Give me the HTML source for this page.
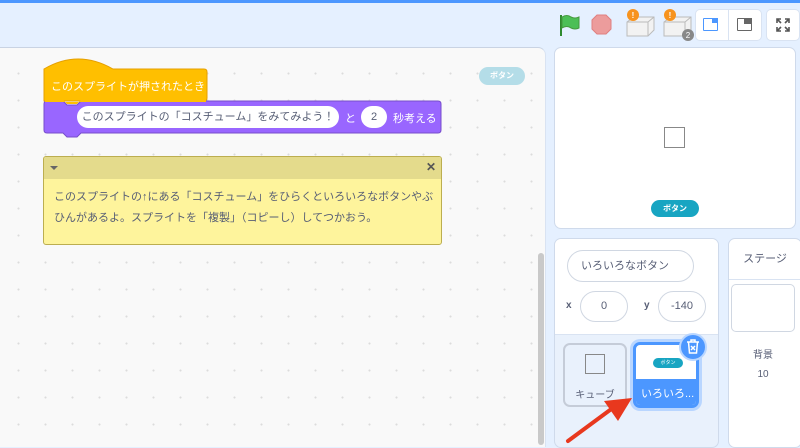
<!DOCTYPE html>
<html><head><meta charset="utf-8"><style>
*{box-sizing:border-box;margin:0;padding:0}
body{width:800px;height:445px;overflow:hidden;background:#e5f0ff;font-family:"Liberation Sans","Noto Sans CJK JP",sans-serif;position:relative;color:#575e75}
.abs{position:absolute;white-space:nowrap}
.code{left:0;top:47px;width:546px;height:400px;background:#f9f9f9;border-top:1px solid #c9d3e3;border-right:1px solid #d9e3f2;border-top-right-radius:8px;
background-image:radial-gradient(circle,#dcdcdc 0.8px,transparent 1.2px);background-size:27px 27px;background-position:5px 12px}
.pill{border-radius:20px;background:#fff;text-align:center}
</style></head><body>
<div class="abs" style="left:0;top:0;width:800px;height:3px;background:#4c97ff"></div>
<svg class="abs" style="left:558px;top:12px" width="24" height="26" viewBox="0 0 24 26"><path d="M3 3 L3 24" stroke="#2e8a2e" stroke-width="2"/><path d="M4 5 Q9 2 13 5 Q17 7 21 5 L21 16 Q17 18 13 16 Q9 13 4 16 Z" fill="#4cbf56" stroke="#45993d" stroke-width="1"/></svg>
<svg class="abs" style="left:591px;top:14px" width="21" height="21" viewBox="0 0 21 21"><polygon points="6,1 15,1 20,6 20,15 15,20 6,20 1,15 1,6" fill="#ec9c9c" stroke="#e08080"/></svg>
<svg class="abs" style="left:624px;top:8px" width="34" height="30" viewBox="0 0 34 30"><path d="M3 14 L10 9 L30 9 L30 22 L24 28 L3 28 Z" fill="#f2f2f2" stroke="#bbb"/><path d="M3 14 L24 14 L30 9 M24 14 L24 28" fill="none" stroke="#bbb"/><circle cx="9" cy="7" r="6" fill="#f7931e"/><text x="9" y="10" font-size="8" fill="#fff" text-anchor="middle" font-weight="bold">!</text></svg>
<svg class="abs" style="left:661px;top:8px" width="34" height="34" viewBox="0 0 34 34"><path d="M3 14 L10 9 L30 9 L30 22 L24 28 L3 28 Z" fill="#f2f2f2" stroke="#bbb"/><path d="M3 14 L24 14 L30 9 M24 14 L24 28" fill="none" stroke="#bbb"/><circle cx="9" cy="7" r="6" fill="#f7931e"/><text x="9" y="10" font-size="8" fill="#fff" text-anchor="middle" font-weight="bold">!</text><circle cx="27" cy="27" r="6" fill="#888"/><text x="27" y="30" font-size="8" fill="#fff" text-anchor="middle">2</text></svg>
<div class="abs" style="left:695px;top:9px;width:67px;height:32px;background:#fff;border:1px solid #d9e3f2;border-radius:5px"></div>
<div class="abs" style="left:728px;top:9px;width:1px;height:32px;background:#d9e3f2"></div>
<div class="abs" style="left:703px;top:18px;width:15px;height:13px;border:1.5px solid #4c97ff;border-radius:1px"></div>
<div class="abs" style="left:712px;top:18px;width:6px;height:5px;background:#4c97ff"></div>
<div class="abs" style="left:737px;top:18px;width:15px;height:13px;border:1.5px solid #666;border-radius:1px"></div>
<div class="abs" style="left:744px;top:18px;width:8px;height:6px;background:#666"></div>
<div class="abs" style="left:766px;top:9px;width:34px;height:32px;background:#fff;border:1px solid #d9e3f2;border-radius:5px"></div>
<svg class="abs" style="left:775px;top:17px" width="16" height="16" viewBox="0 0 16 16" fill="none" stroke="#555" stroke-width="1.6"><path d="M2 6V2h4M2 2l4 4M14 6V2h-4M14 2l-4 4M2 10v4h4M2 14l4-4M14 10v4h-4M14 14l-4-4"/></svg>
<div class="abs code"></div>
<div class="abs" style="left:538px;top:253px;width:6px;height:192px;background:#c9c9c9;border-radius:3px"></div>
<div class="abs" style="left:479px;top:67px;width:46px;height:18px;border-radius:9px;background:#b4dde8;color:#fff;font-size:8px;font-weight:bold;text-align:center;line-height:18px">ボタン</div>
<svg class="abs" style="left:43px;top:55px" width="400" height="86" viewBox="0 0 400 86">
<path d="M1 14 Q35 -6 70 14 L161 14 Q164 14 164 17 L164 43 Q164 46 161 46 L1 46 Z" fill="#ffbf00" stroke="#e6a000"/>
<path d="M4 46 L20 46 L24 50 L34 50 L38 46 L395 46 Q398 46 398 49 L398 75 Q398 78 395 78 L38 78 L34 82 L24 82 L20 78 L4 78 Q1 78 1 75 L1 49 Q1 46 4 46 Z" fill="#9966ff" stroke="#774dcb"/>
<path d="M2 45 L20 45 L24 49 L34 49 L38 45 L163 45 L163 47 L2 47Z" fill="#ffbf00"/>
</svg>
<div class="abs" style="left:51px;top:78px;color:#fff;font-size:11px">このスプライトが押されたとき</div>
<div class="abs pill" style="left:77px;top:106px;width:262px;height:22px;line-height:22px;font-size:11px;color:#575e75">このスプライトの「コスチューム」をみてみよう！</div>
<div class="abs" style="left:345px;top:110px;color:#fff;font-size:11px">と</div>
<div class="abs pill" style="left:361px;top:106px;width:26px;height:22px;line-height:22px;font-size:11px;color:#575e75">2</div>
<div class="abs" style="left:393px;top:110px;color:#fff;font-size:11px">秒考える</div>
<div class="abs" style="left:43px;top:156px;width:399px;height:89px;background:#fef49c;border:1px solid #bcae50;border-radius:3px;overflow:hidden;white-space:normal">
<div style="height:22px;background:#e4db8c;position:relative">
<div class="abs" style="left:6px;top:9px;border-left:4px solid transparent;border-right:4px solid transparent;border-top:4px solid #666"></div>
<div class="abs" style="right:5px;top:3px;font-size:12px;color:#555;font-weight:bold">✕</div></div>
<div style="padding:8px 0 0 10px;font-size:11px;line-height:21px;color:#575e75">このスプライトの↑にある「コスチューム」をひらくといろいろなボタンやぶひんがあるよ。スプライトを「複製」（コピーし）してつかおう。</div>
</div>
<div class="abs" style="left:554px;top:47px;width:242px;height:182px;background:#fff;border:1px solid #cfdaeb;border-radius:7px"></div>
<div class="abs" style="left:664px;top:127px;width:21px;height:21px;border:1px solid #888"></div>
<div class="abs" style="left:651px;top:200px;width:48px;height:17px;border-radius:9px;background:#18a5c2;color:#fff;font-size:8px;font-weight:bold;text-align:center;line-height:17px">ボタン</div>
<div class="abs" style="left:554px;top:238px;width:165px;height:210px;background:#e9f1fc;border:1px solid #cfdaeb;border-radius:7px;overflow:hidden">
<div style="height:96px;background:#fff;border-bottom:1px solid #d9e3f2"></div></div>
<div class="abs pill" style="left:567px;top:250px;width:127px;height:32px;border:1px solid #d0d7e2;text-align:left;padding-left:13px;line-height:30px;font-size:11px">いろいろなボタン</div>
<div class="abs" style="left:566px;top:300px;font-size:10px;font-weight:bold">x</div>
<div class="abs pill" style="left:580px;top:291px;width:48px;height:31px;border:1px solid #d0d7e2;line-height:29px;font-size:11px">0</div>
<div class="abs" style="left:644px;top:300px;font-size:10px;font-weight:bold">y</div>
<div class="abs pill" style="left:658px;top:291px;width:48px;height:31px;border:1px solid #d0d7e2;line-height:29px;font-size:11px">-140</div>
<div class="abs" style="left:563px;top:343px;width:64px;height:64px;border:2px solid #c5ccd8;border-radius:7px;background:#e9f1fc"></div>
<div class="abs" style="left:585px;top:354px;width:20px;height:20px;border:1px solid #888"></div>
<div class="abs" style="left:563px;top:386px;width:64px;text-align:center;font-size:10px">キューブ</div>
<div class="abs" style="left:633px;top:342px;width:66px;height:66px;border:3px solid #4c97ff;border-radius:7px;background:#fff;box-shadow:0 0 0 3px #b9d6ff;overflow:hidden">
<div class="abs" style="left:17px;top:13px;width:30px;height:10px;border-radius:5px;background:#18a5c2;color:#fff;font-size:5px;text-align:center;line-height:10px">ボタン</div>
<div class="abs" style="left:0;top:34px;width:60px;height:30px;background:#4c97ff;color:#fff;font-size:11px;padding:6px 0 0 5px">いろいろ...</div></div>
<div class="abs" style="left:679px;top:333px;width:28px;height:28px;border-radius:14px;background:#4c97ff;border:2px solid #b9d6ff"></div>
<svg class="abs" style="left:686px;top:339px" width="14" height="15" viewBox="0 0 14 15" fill="none" stroke="#fff" stroke-width="1.5"><path d="M1 3h12M5 3V1h4v2M2.5 3l1 11h7l1-11M5 7l4 4M9 7l-4 4"/></svg>
<svg class="abs" style="left:560px;top:395px" width="75" height="50" viewBox="0 0 75 50"><path d="M8 46 L50 15" stroke="#e8381e" stroke-width="4" stroke-linecap="round"/><polygon points="72,3 44,6 58,26" fill="#e8381e"/></svg>
<div class="abs" style="left:728px;top:238px;width:74px;height:210px;background:#fff;border:1px solid #cfdaeb;border-radius:7px">
<div style="height:41px;border-bottom:1px solid #d9e3f2;text-align:center;line-height:40px;font-size:11px">ステージ</div></div>
<div class="abs" style="left:731px;top:284px;width:64px;height:48px;border:1px solid #d0d7e2;border-radius:5px;background:#fff"></div>
<div class="abs" style="left:728px;top:346px;width:70px;text-align:center;font-size:10px">背景</div>
<div class="abs" style="left:728px;top:369px;width:70px;text-align:center;font-size:10px">10</div>
</body></html>
